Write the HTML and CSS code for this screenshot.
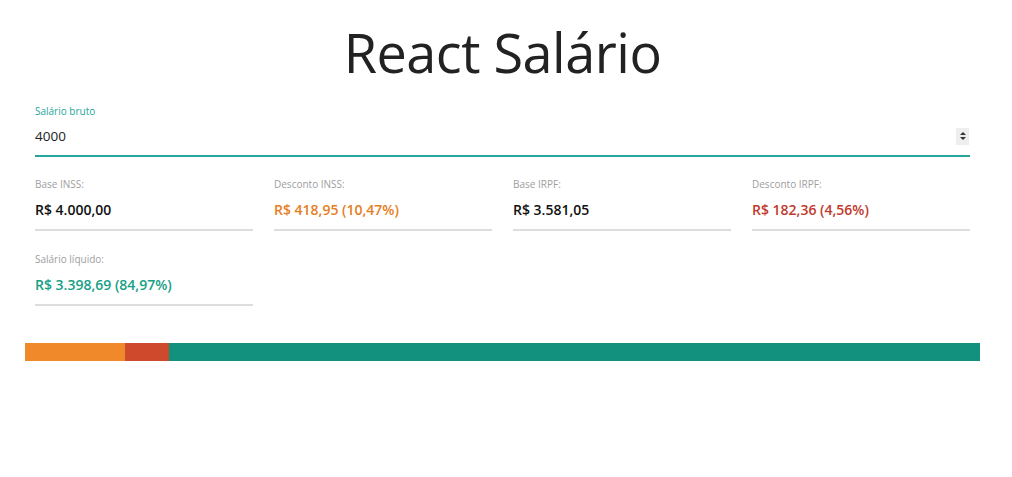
FILE: index.html
```html
<!DOCTYPE html>
<html lang="pt-BR">
<head>
<meta charset="utf-8">
<title>React Salário</title>
<link rel="stylesheet" href="styles.css">
</head>
<body>
<div class="page">
  <h1 class="title">React Salário</h1>
  <div class="field">
    <label class="field-label">Salário bruto</label>
    <div class="field-row">
      <span class="field-value">4000</span>
      <span class="spinner">
        <svg width="8" height="12" viewBox="0 0 8 12"><path d="M1 5 L4 2 L7 5 Z" fill="#333"/><path d="M1 7 L4 10 L7 7 Z" fill="#333"/></svg>
      </span>
    </div>
  </div>
  <div class="grid">
    <div class="cell">
      <div class="cell-label">Base INSS:</div>
      <div class="cell-value">R$ 4.000,00</div>
    </div>
    <div class="cell">
      <div class="cell-label">Desconto INSS:</div>
      <div class="cell-value orange">R$ 418,95 (10,47%)</div>
    </div>
    <div class="cell">
      <div class="cell-label">Base IRPF:</div>
      <div class="cell-value">R$ 3.581,05</div>
    </div>
    <div class="cell">
      <div class="cell-label">Desconto IRPF:</div>
      <div class="cell-value red">R$ 182,36 (4,56%)</div>
    </div>
    <div class="cell">
      <div class="cell-label">Salário líquido:</div>
      <div class="cell-value teal">R$ 3.398,69 (84,97%)</div>
    </div>
  </div>
  <div class="bar">
    <div class="seg seg-orange" style="width:10.47%"></div>
    <div class="seg seg-red" style="width:4.56%"></div>
    <div class="seg seg-teal" style="width:84.97%"></div>
  </div>
</div>
</body>
</html>
```

FILE: styles.css
```css
html, body {
  margin: 0;
  padding: 0;
  background: #fff;
}
body {
  font-family: "Open Sans", "Noto Sans", sans-serif;
  color: #222;
}
.page {
  width: 955px;
  margin-left: 25px;
  display: flex;
  flex-direction: column;
}
.title {
  margin: 16px 0 0 0;
  font-size: 54px;
  font-weight: 400;
  line-height: 72px;
  text-align: center;
  color: #222;
  letter-spacing: -0.5px;
}
.field {
  margin: 16px 10px 0 10px;
  display: flex;
  flex-direction: column;
}
.field-label {
  font-size: 10px;
  color: #26a69a;
  line-height: 14px;
}
.field-row {
  display: flex;
  align-items: center;
  justify-content: space-between;
  height: 28px;
  margin-top: 4px;
  border-bottom: 2px solid #26a69a;
  padding-bottom: 5px;
}
.field-value {
  font-size: 13.5px;
  color: #222;
}
.spinner {
  display: flex;
  align-items: center;
  justify-content: center;
  width: 13px;
  height: 17px;
  background: #eee;
  margin-right: 1px;
}
.grid {
  display: grid;
  grid-template-columns: repeat(4, 1fr);
  column-gap: 21px;
  row-gap: 21px;
  margin: 20px 10px 0 10px;
}
.cell {
  display: flex;
  flex-direction: column;
  border-bottom: 2px solid #ddd;
  padding-bottom: 10px;
}
.cell-label {
  font-size: 10px;
  color: #9e9e9e;
  line-height: 14px;
}
.cell-value {
  font-size: 14px;
  font-weight: 600;
  color: #111;
  margin-top: 10px;
  line-height: 18px;
}
.orange { color: #e67e22; }
.red { color: #c0392b; }
.teal { color: #16a085; }
.bar {
  display: flex;
  height: 18px;
  margin-top: 37px;
}
.seg { height: 100%; }
.seg-orange { background: #f0892a; }
.seg-red { background: #cf4a2d; }
.seg-teal { background: #12917f; }
```
